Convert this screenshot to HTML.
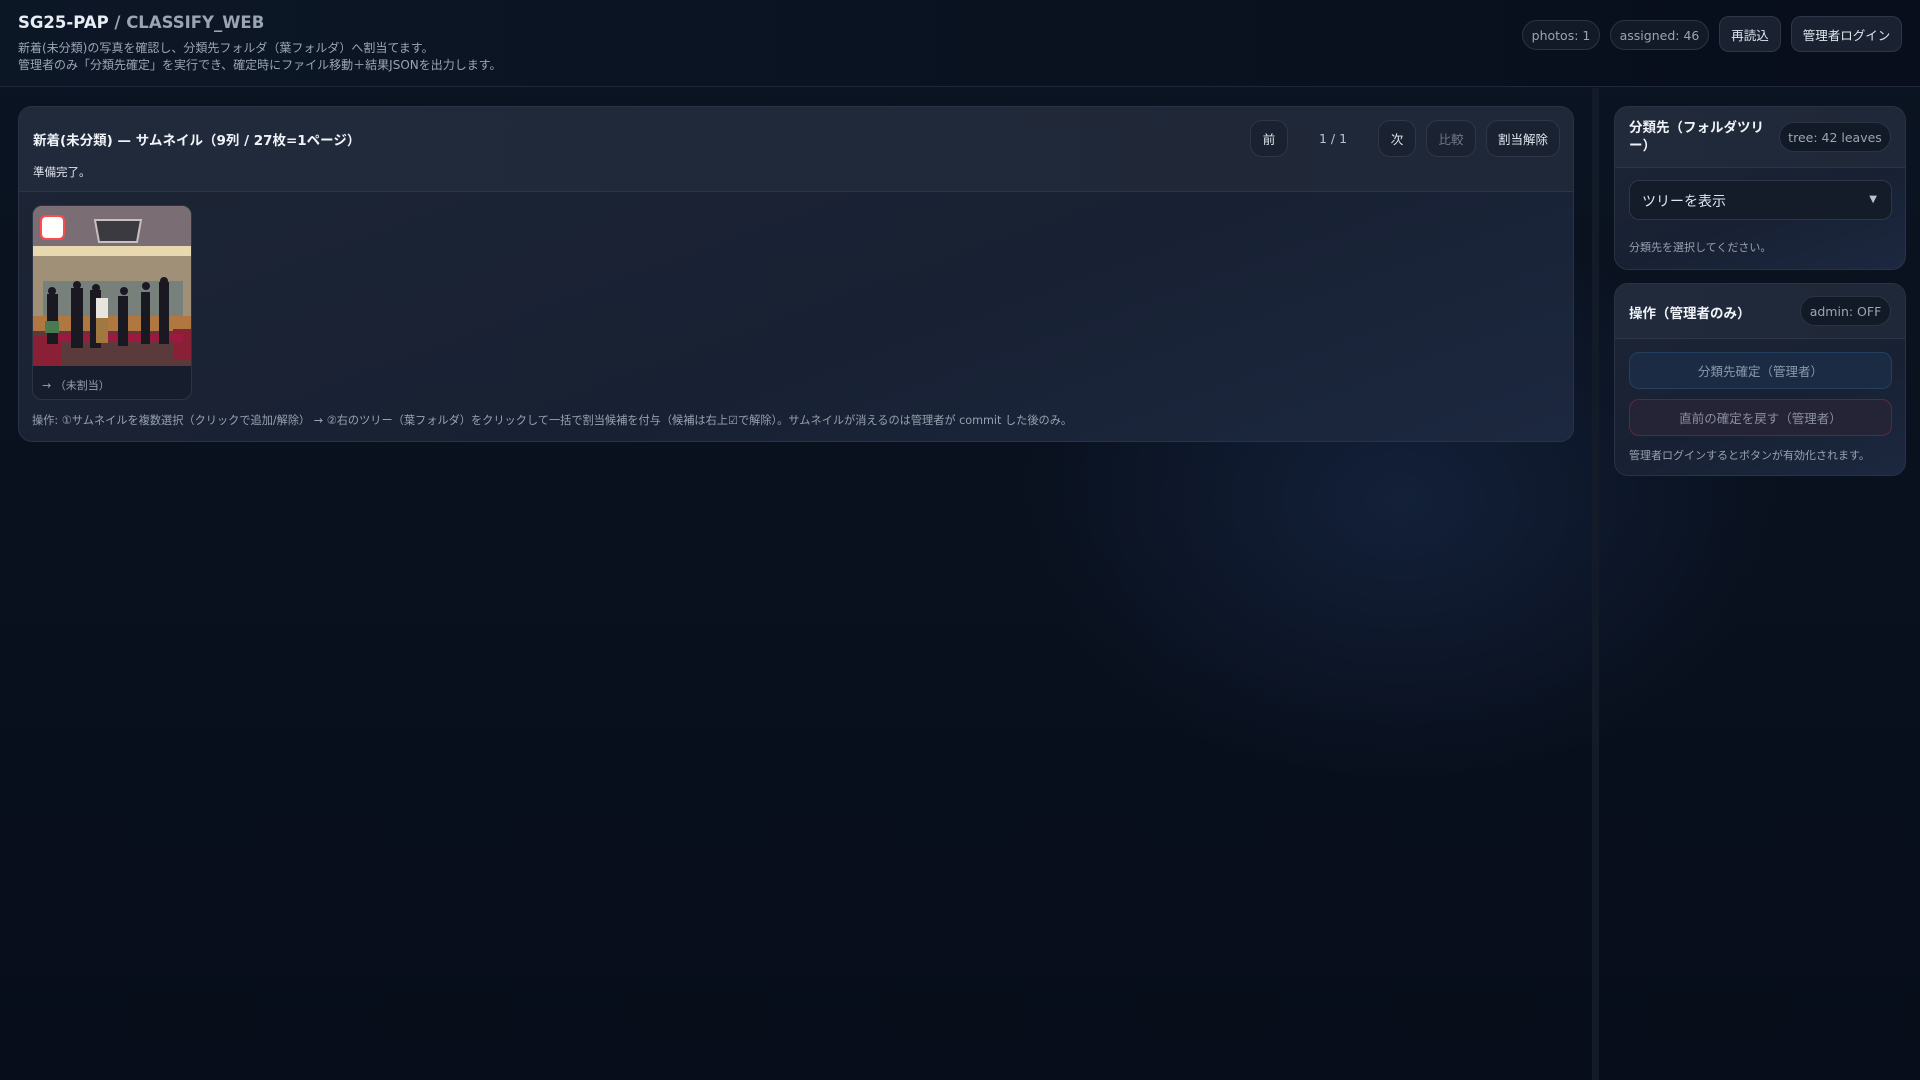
<!DOCTYPE html>
<html><head><meta charset="utf-8"><style>
*{box-sizing:border-box;margin:0;padding:0}
body{width:1920px;height:1080px;overflow:hidden;font-family:"DejaVu Sans","Liberation Sans","Noto Sans CJK JP",sans-serif;color:#e6ebf2;
background:radial-gradient(ellipse 380px 280px at 1400px 500px,#132039 0%,rgba(11,18,32,0) 100%),linear-gradient(180deg,#0b1422 0%,#070d1a 100%);position:relative}
.a{position:absolute}
.hdr{left:0;top:0;width:1920px;height:87px;border-bottom:1px solid #1e2838;background:linear-gradient(90deg,#0c1726,#080e1b)}
.title{left:18px;top:13px;font-size:16.5px;font-weight:bold;color:#e8edf4}
.title span{color:#9aa4b2}
.sub{left:18px;font-size:12px;color:#9aa4b2}
.chip{border:1px solid #2b3444;border-radius:16px;background:#121a28;color:#9aa4b2;font-size:12.5px;display:flex;align-items:center;justify-content:center}
.btn{border:1px solid #2e3747;border-radius:10px;background:#1a2231;color:#dfe5ee;font-size:12.5px;display:flex;align-items:center;justify-content:center}
.panel{border:1px solid #2a3344;border-radius:14px;background:linear-gradient(160deg,#1d2535 0%,#182133 60%,#1c2840 100%);overflow:hidden}
.ph{border-bottom:1px solid #2c3546;background:linear-gradient(90deg,#212a3a,#1f2838)}
.pt{font-size:13.5px;font-weight:bold;color:#f0f3f8}
.muted{color:#97a1af;font-size:11.5px}
</style></head><body>
<div class="a hdr"></div>
<div class="a title">SG25-PAP <span>/ CLASSIFY_WEB</span></div>
<div class="a sub" style="top:39px">新着(未分類)の写真を確認し、分類先フォルダ（葉フォルダ）へ割当てます。</div>
<div class="a sub" style="top:56px">管理者のみ「分類先確定」を実行でき、確定時にファイル移動＋結果JSONを出力します。</div>
<div class="a chip" style="left:1522px;top:20px;width:78px;height:30px">photos: 1</div>
<div class="a chip" style="left:1610px;top:20px;width:99px;height:30px">assigned: 46</div>
<div class="a btn" style="left:1719px;top:16px;width:62px;height:36px">再読込</div>
<div class="a btn" style="left:1791px;top:16px;width:111px;height:36px">管理者ログイン</div>

<div class="a" style="left:1592px;top:88px;width:7px;height:992px;background:#131b29"></div>

<div class="a panel" style="left:18px;top:106px;width:1556px;height:336px">
 <div class="ph" style="height:85px;position:relative">
  <div class="a pt" style="left:14px;top:22px">新着(未分類) — サムネイル（9列 / 27枚=1ページ）</div>
  <div class="a" style="left:14px;top:57px;font-size:11.5px;color:#dfe5ee">準備完了。</div>
  <div class="a btn" style="left:1231px;top:13px;width:38px;height:37px;border-radius:12px">前</div>
  <div class="a" style="left:1282px;top:24px;width:64px;text-align:center;font-size:12.5px;color:#b9c1cc">1 / 1</div>
  <div class="a btn" style="left:1359px;top:13px;width:38px;height:37px;border-radius:12px">次</div>
  <div class="a btn" style="left:1407px;top:13px;width:50px;height:37px;border-radius:12px;color:#6f7886;background:#1b2231">比較</div>
  <div class="a btn" style="left:1467px;top:13px;width:74px;height:37px;border-radius:12px">割当解除</div>
 </div>
 <div class="a" style="left:13px;top:98px;width:160px;height:195px;border:1px solid #2c3546;border-radius:10px;overflow:hidden;background:#161e2d">
  <svg width="160" height="160" viewBox="0 0 160 160" style="display:block">
   <rect width="160" height="160" fill="#6a5e68"/>
   <rect y="0" width="160" height="40" fill="#7a6e74"/>
   <polygon points="62,14 108,14 104,36 66,36" fill="#3a3a40" stroke="#c8c0c0" stroke-width="2"/>
   <rect y="40" width="160" height="10" fill="#e8d8b0"/>
   <rect y="50" width="160" height="70" fill="#a09078"/>
   <rect x="10" y="75" width="140" height="40" fill="#3d6a80" opacity=".4"/>
   <rect y="110" width="160" height="20" fill="#b07840"/>
   <rect y="125" width="160" height="35" fill="#5a3a3a"/>
   <rect x="0" y="130" width="28" height="30" fill="#8a2035"/>
   <rect x="140" y="123" width="20" height="30" fill="#8a2035"/>
   <rect x="20" y="128" width="130" height="8" fill="#9a1a40"/>
   <g fill="#1a1820">
    <rect x="14" y="88" width="11" height="50"/><rect x="57" y="84" width="11" height="58"/>
    <rect x="85" y="90" width="10" height="50"/><rect x="108" y="86" width="9" height="52"/>
    <rect x="126" y="76" width="10" height="62"/><rect x="38" y="82" width="12" height="60"/>
    <circle cx="19" cy="85" r="4"/><circle cx="44" cy="79" r="4"/><circle cx="63" cy="82" r="4"/><circle cx="91" cy="85" r="4"/><circle cx="113" cy="80" r="4"/><circle cx="131" cy="75" r="4"/>
   </g>
   <rect x="63" y="92" width="12" height="20" fill="#e8e4de"/><rect x="63" y="112" width="12" height="25" fill="#a07840"/>
   <rect x="12" y="115" width="14" height="12" fill="#4a7a50"/>
  </svg>
  <div class="a" style="left:7px;top:9px;width:25px;height:25px;border:2px solid #ff4a4a;border-radius:6px;background:#fff"></div>
  <div class="a muted" style="left:9px;top:171px;font-size:11px">→ （未割当）</div>
 </div>
 <div class="a muted" style="left:13px;top:305px;font-size:11.2px">操作: ①サムネイルを複数選択（クリックで追加/解除） → ②右のツリー（葉フォルダ）をクリックして一括で割当候補を付与（候補は右上☑で解除）。サムネイルが消えるのは管理者が commit した後のみ。</div>
</div>

<div class="a panel" style="left:1614px;top:106px;width:292px;height:164px">
 <div class="ph" style="height:61px;position:relative">
  <div class="a pt" style="left:14px;top:12px;width:150px;line-height:18px">分類先（フォルダツリー）</div>
  <div class="a chip" style="left:164px;top:15px;width:112px;height:30px">tree: 42 leaves</div>
 </div>
 <div class="a" style="left:14px;top:73px;width:263px;height:40px;border:1px solid #2e3747;border-radius:10px;background:#141b29;font-size:14px;color:#dfe5ee;padding:10px 12px">ツリーを表示<span style="position:absolute;right:14px;top:13px;font-size:10px;color:#b9c1cc">▼</span></div>
 <div class="a muted" style="left:14px;top:132px;font-size:11px">分類先を選択してください。</div>
</div>

<div class="a panel" style="left:1614px;top:283px;width:292px;height:193px">
 <div class="ph" style="height:55px;position:relative">
  <div class="a pt" style="left:14px;top:18px">操作（管理者のみ）</div>
  <div class="a chip" style="left:185px;top:12px;width:91px;height:30px">admin: OFF</div>
 </div>
 <div class="a" style="left:14px;top:68px;width:263px;height:37px;border:1px solid #24405e;border-radius:10px;background:#1b2b44;color:#8a98ab;font-size:12.5px;display:flex;align-items:center;justify-content:center">分類先確定（管理者）</div>
 <div class="a" style="left:14px;top:115px;width:263px;height:37px;border:1px solid #5a2a3a;border-radius:10px;background:#242436;color:#8a8f9c;font-size:12.5px;display:flex;align-items:center;justify-content:center">直前の確定を戻す（管理者）</div>
 <div class="a muted" style="left:14px;top:163px;font-size:11px">管理者ログインするとボタンが有効化されます。</div>
</div>
</body></html>
